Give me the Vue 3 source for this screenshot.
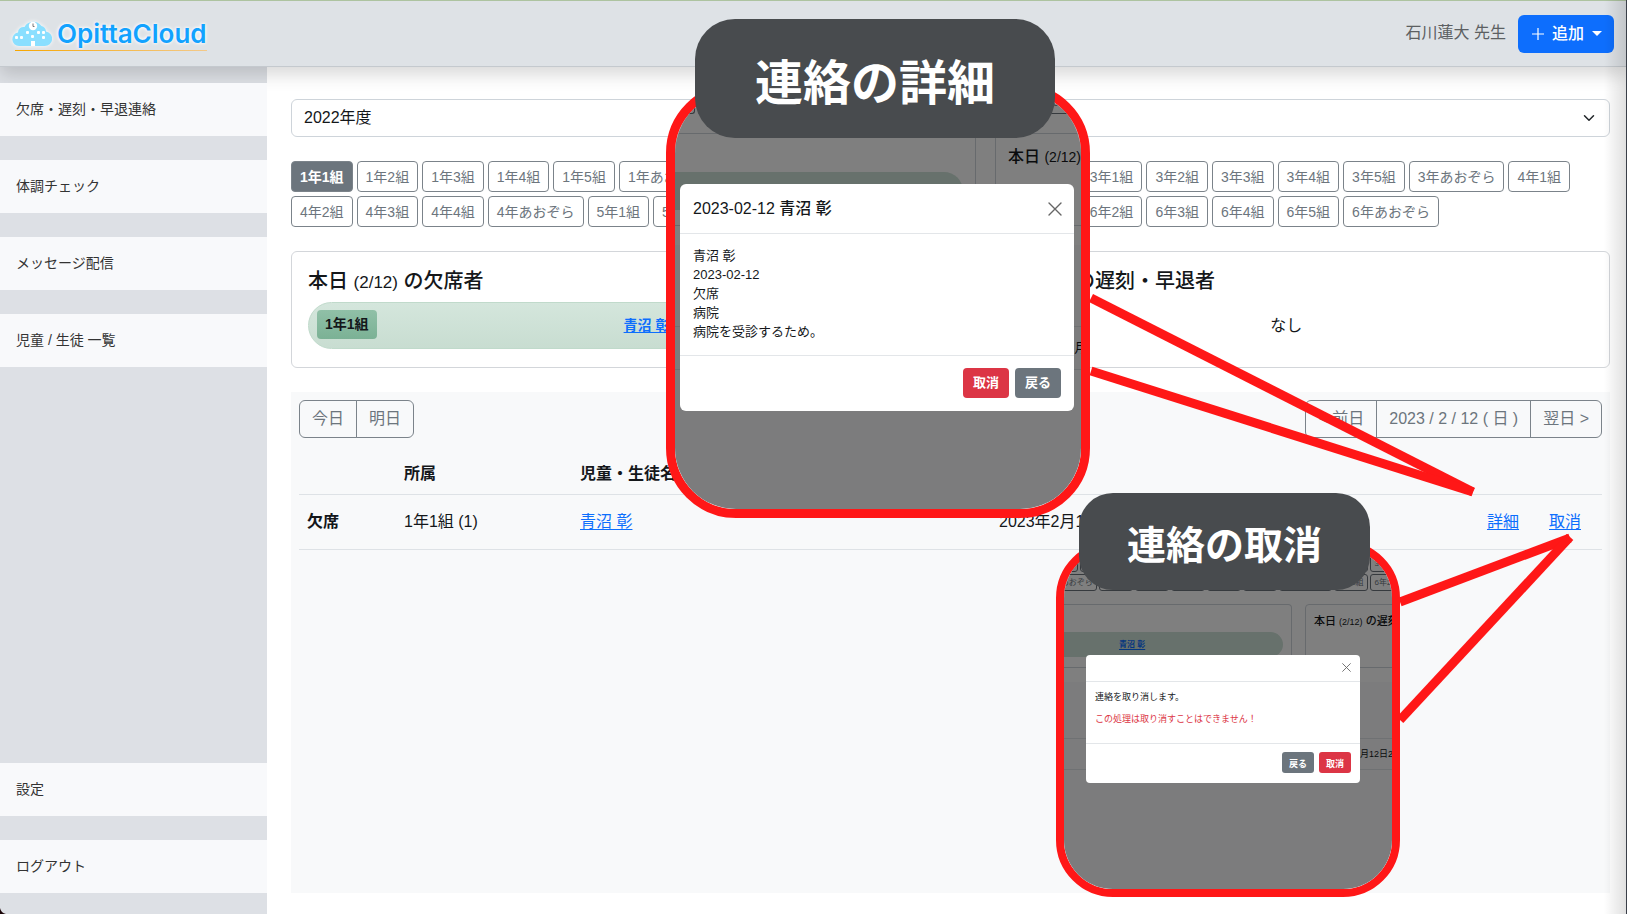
<script setup>
import { ref } from 'vue'

const mainLinks = ['欠席・遅刻・早退連絡', '体調チェック', 'メッセージ配信', '児童 / 生徒 一覧']
const footLinks = ['設定', 'ログアウト']

const counts = { 1: 5, 2: 4, 3: 5, 4: 4, 5: 5, 6: 5 }
const classes = Object.entries(counts).flatMap(([grade, n]) => [
  ...Array.from({ length: n }, (_, i) => `${grade}年${i + 1}組`),
  `${grade}年あおぞら`,
])
const current = ref('1年1組')
const year = ref('2022年度')

// Chips that lie under a callout's label carry no text.
const chipRow = (from, to) =>
  classes.slice(from, to).map((name, i, all) => ({
    wide: name.endsWith('あおぞら'),
    text: i === 0 || i >= all.length - 2 ? name : '',
  }))
const upperChips = chipRow(3, 12)
const lowerChips = chipRow(21, 30)

const callouts = [
  { id: 'detail', label: '連絡の詳細', rows: [lowerChips] },
  { id: 'cancel', label: '連絡の取消', rows: [upperChips, lowerChips] },
]
const details = ['青沼 彰', '2023-02-12', '欠席', '病院', '病院を受診するため。']
</script>

<template>
  <div class="app">
    <header class="topbar">
      <a class="brand" href="#" aria-label="OpittaCloud">
        <svg class="cloud" viewBox="0 0 40 28" aria-hidden="true">
          <path d="M7 26a6.800 6.800 0 0 1-1-13.500 5.500 5.500 0 0 1 6.500-5.500 10 10 0 0 1 17-1 6 6 0 0 1 4.500 5.500A7.300 7.300 0 0 1 32.500 26z" fill="#8adfff" />
          <circle cx="21" cy="6" r="4.200" fill="#fff" />
          <path d="M21 3.500v3h1.500" fill="none" stroke="#777" stroke-width="1" />
          <g fill="#fff">
            <rect x="3" y="16" width="3" height="3" rx="1" />
            <rect x="8" y="16" width="3" height="3" rx="1" />
            <rect x="14" y="11" width="3" height="3" rx="1" />
            <rect x="19" y="15" width="3" height="3" rx="1" />
            <rect x="25" y="11" width="3" height="3" rx="1" />
            <rect x="30" y="11" width="3" height="3" rx="1" />
            <rect x="30" y="16" width="3" height="3" rx="1" />
            <rect x="19" y="21" width="4" height="5" />
          </g>
        </svg>
        <span>OpittaCloud</span>
      </a>
      <div class="account">
        <span class="user">石川蓮大 先生</span>
        <button class="add" type="button">
          <svg width="12" height="12" viewBox="0 0 12 12" aria-hidden="true"><path d="M6 0v12M0 6h12" stroke="#fff" stroke-width="1.200" /></svg>
          <span>追加</span>
          <svg width="10" height="5" viewBox="0 0 10 5" aria-hidden="true"><path d="M0 0h10L5 5z" fill="#fff" /></svg>
        </button>
      </div>
    </header>

    <div class="body">
      <nav class="sidebar">
        <a v-for="l in mainLinks" :key="l" href="#">{{ l }}</a>
        <div class="spacer"></div>
        <a v-for="l in footLinks" :key="l" href="#">{{ l }}</a>
      </nav>

      <main>
        <div class="select">
          <select v-model="year" aria-label="年度"><option>2022年度</option></select>
          <svg width="12" height="12" viewBox="0 0 16 16" aria-hidden="true"><path d="M2 5l6 6 6-6" fill="none" stroke="#212529" stroke-width="2" stroke-linecap="round" stroke-linejoin="round" /></svg>
        </div>

        <div class="chips">
          <button v-for="c in classes" :key="c" type="button" :class="{ on: c === current }" @click="current = c">{{ c }}</button>
        </div>

        <div class="cards">
          <section class="card">
            <h2>本日 <small>(2/12)</small> の欠席者</h2>
            <div class="pill"><span class="badge">1年1組</span><span class="who"><a href="#">青沼 彰</a></span></div>
          </section>
          <section class="card">
            <h2>本日 <small>(2/12)</small> の遅刻・早退者</h2>
            <p class="none">なし</p>
          </section>
        </div>

        <section class="panel">
          <div class="tools">
            <div class="group"><button type="button">今日</button><button type="button">明日</button></div>
            <div class="group"><button type="button">&lt; 前日</button><button type="button">2023 / 2 / 12 ( 日 )</button><button type="button">翌日 &gt;</button></div>
          </div>
          <table>
            <colgroup><col class="c1" /><col class="c2" /><col class="c3" /><col /><col class="c5" /></colgroup>
            <thead><tr><th></th><th>所属</th><th>児童・生徒名</th><th></th><th></th></tr></thead>
            <tbody>
              <tr>
                <th scope="row">欠席</th>
                <td>1年1組 (1)</td>
                <td><a href="#">青沼 彰</a></td>
                <td>2023年2月12日</td>
                <td><div class="actions"><a href="#">詳細</a><a href="#">取消</a></div></td>
              </tr>
            </tbody>
          </table>
        </section>
      </main>
    </div>

    <svg class="pointers" aria-hidden="true">
      <path d="M1091 298L1473 492" /><path d="M1091 371L1473 492" />
      <path d="M1400 602L1570 538" /><path d="M1400 720L1570 537" />
    </svg>

    <section v-for="c in callouts" :key="c.id" class="callout" :class="c.id">
      <div class="frame">
        <div class="mini">
          <div v-for="(row, i) in c.rows" :key="i" class="mini-chips">
            <span v-for="(chip, j) in row" :key="j" :class="{ wide: chip.wide }">{{ chip.text }}</span>
          </div>
          <div class="mini-cards">
            <div class="mini-card first"><div class="mini-pill"><a href="#">青沼 彰</a></div></div>
            <div class="mini-card"><h3>本日 <small>(2/12)</small> の遅刻・早退者</h3></div>
          </div>
          <div class="mini-panel">
            <div class="mini-head"></div>
            <div class="mini-row">2023年2月12日2</div>
          </div>
        </div>
        <div class="shade"></div>
        <div class="modal" role="dialog" :aria-label="c.label">
          <div class="modal-head">
            <h3>{{ c.id === 'detail' ? '2023-02-12 青沼 彰' : '' }}</h3>
            <button class="close" type="button" aria-label="閉じる">
              <svg viewBox="0 0 14 14" aria-hidden="true"><path d="M1 1l12 12M13 1L1 13" fill="none" stroke="#666" stroke-width="1.400" stroke-linecap="round" /></svg>
            </button>
          </div>
          <div v-if="c.id === 'detail'" class="modal-body">
            <p v-for="d in details" :key="d">{{ d }}</p>
          </div>
          <div v-else class="modal-body">
            <p>連絡を取り消します。</p>
            <p class="warn">この処理は取り消すことはできません！</p>
          </div>
          <div class="modal-foot">
            <button class="danger" type="button">取消</button>
            <button class="back" type="button">戻る</button>
          </div>
        </div>
      </div>
      <div class="label">{{ c.label }}</div>
    </section>

    <div class="edge"></div>
    <svg class="corner" width="6" height="6" viewBox="0 0 6 6" aria-hidden="true"><path d="M0 0Q1 5 6 6H0z" fill="#1a0508" /></svg>
  </div>
</template>

<style>
body { margin: 0; }
</style>

<style scoped>
* { box-sizing: border-box; }
.app {
  position: relative;
  display: flex;
  flex-direction: column;
  min-height: 100vh;
  overflow: hidden;
  background: #fff;
  color: #14171a;
  font: 16px/24px "Liberation Sans", "Noto Sans CJK JP", sans-serif;
}
button, select { font: inherit; color: inherit; margin: 0; }
h2, h3, p { margin: 0; font-weight: 500; }
p { font-weight: 400; }
a { color: #0d6efd; text-underline-offset: 2px; }

.topbar {
  position: relative;
  z-index: 1;
  display: flex;
  justify-content: space-between;
  align-items: center;
  height: 67px;
  padding: 0 13px 0 12px;
  background: #dee2e6;
  border-top: 1px solid #adc3a0;
  border-bottom: 1px solid #c4c9ce;
  box-shadow: 0 8px 16px rgba(0, 0, 0, 0.15);
}
.brand {
  position: relative;
  display: flex;
  align-items: center;
  gap: 5px;
  color: #12a2ff;
  text-decoration: none;
  font: 600 26px/34px Inter, sans-serif;
  text-shadow: 0 0 3px #fff, 0 0 4px #fff;
}
.brand::after {
  content: "";
  position: absolute;
  left: 3px;
  right: 0;
  bottom: 0;
  height: 1px;
  background: linear-gradient(90deg, #f7a600, #f3c98a);
}
.cloud { width: 40px; height: 28px; filter: drop-shadow(0 0 2px #fff); }
.account { display: flex; align-items: center; gap: 12px; }
.user { padding-bottom: 2px; color: #5c5f62; }
.add {
  display: flex;
  align-items: center;
  gap: 8px;
  height: 38px;
  padding: 0 12px 0 14px;
  border: 0;
  border-radius: 6px;
  background: #0d6efd;
  color: #fff;
  font-weight: 500;
}

.body { display: flex; flex: 1; }
.sidebar {
  display: flex;
  flex-direction: column;
  gap: 24px;
  width: 267px;
  padding: 16px 0 21px;
  background: #dde0e5;
}
.sidebar a {
  position: relative;
  z-index: 2;
  padding: 14px 16px 15px;
  background: #f8f9fb;
  color: #333;
  font-size: 14px;
  text-decoration: none;
}
.spacer { flex: 1; }

main {
  display: flex;
  flex: 1;
  flex-direction: column;
  gap: 24px;
  min-width: 0;
  padding: 32px 17px 21px 24px;
}
.select { position: relative; }
.select select {
  display: block;
  width: 100%;
  height: 38px;
  padding: 0 12px;
  border: 1px solid #ced4da;
  border-radius: 6px;
  background: #fff;
  appearance: none;
}
.select svg { position: absolute; right: 15px; top: 13px; }
.chips { display: flex; flex-wrap: wrap; gap: 4px; padding-right: 24px; }
.chips button {
  height: 31px;
  padding: 0 8px;
  border: 1px solid #7b838a;
  border-radius: 4px;
  background: #fff;
  color: #6c757d;
  font-size: 14px;
}
.chips button.on { background: #6c757d; color: #fff; font-weight: bold; }

.cards { display: grid; grid-template-columns: 1fr 1fr; gap: 24px; }
.card {
  height: 117px;
  padding: 17px 16px;
  border: 1px solid #d3d6da;
  border-radius: 6px;
}
.card h2 { margin-bottom: 7px; font-size: 20px; }
.card small { font-size: 17px; }
.pill {
  display: flex;
  align-items: center;
  height: 47px;
  padding: 0 8px 2px;
  border: 1px solid #c0dacb;
  border-radius: 24px;
  background: linear-gradient(#d4e6dc, #c8ddd1);
  font-size: 14px;
  font-weight: bold;
}
.badge { padding: 2px 8px 3px; border-radius: 4px; background: linear-gradient(#90c0a7, #7bb195); }
.who { flex: 1; padding-left: 4px; text-align: center; }
.none { padding-top: 12px; text-align: center; }

.panel { flex: 1; padding: 8px; background: #f8f9fa; }
.tools { display: flex; justify-content: space-between; margin-bottom: 16px; }
.group { display: flex; }
.group button {
  height: 38px;
  padding: 0 12px;
  border: 1px solid #7b838a;
  background: none;
  color: #6c757d;
}
.group button + button { margin-left: -1px; }
.group button:first-child { border-radius: 6px 0 0 6px; }
.group button:last-child { border-radius: 0 6px 6px 0; }
table { width: 100%; border-spacing: 0; table-layout: fixed; text-align: left; }
.c1 { width: 97px; }
.c2 { width: 176px; }
.c3 { width: 419px; }
.c5 { width: 136px; }
th, td { height: 41px; padding: 0 8px; border-bottom: 1px solid #dee2e6; white-space: nowrap; }
tbody th, tbody td { height: 55px; }
.actions { display: flex; justify-content: flex-end; gap: 30px; padding-right: 13px; }

.pointers { position: absolute; inset: 0; z-index: 3; width: 100%; height: 100%; }
.pointers path { stroke: #ff1717; stroke-width: 9; }

.callout { position: absolute; z-index: 4; }
.frame {
  position: relative;
  width: 100%;
  height: 100%;
  overflow: hidden;
  border: 9px solid #ff1717;
  border-radius: 70px;
  background: #fff;
}
.label {
  position: absolute;
  display: flex;
  align-items: center;
  justify-content: center;
  border-radius: 40px;
  background: #484b4e;
  color: #fff;
  font-family: "Noto Sans CJK JP", sans-serif;
  font-weight: bold;
}
.shade { position: absolute; inset: 0; background: rgba(0, 0, 0, 0.5); }

.detail { left: 666px; top: 83px; width: 424px; height: 435px; }
.detail .label { left: 29px; top: -64px; width: 360px; height: 119px; font-size: 48px; }
.cancel { left: 1056px; top: 541px; width: 344px; height: 356px; }
.cancel .frame { border-width: 8px; border-radius: 57px; }
.cancel .label { left: 23px; top: -48px; width: 291px; height: 97px; border-radius: 34px; font-size: 39px; }

.mini { display: flex; flex-direction: column; height: 100%; white-space: nowrap; }
.mini-chips { display: flex; }
.mini-chips span { flex: none; border: 1px solid #6c757d; border-radius: 3px; color: #6c757d; text-align: center; }
.mini-cards { display: grid; }
.mini-card { border: 1px solid #ced4da; border-radius: 4px; overflow: hidden; }
.mini-card.first { border-left: 0; border-radius: 0 4px 4px 0; padding-left: 0; }
.mini-pill { border-radius: 0 20px 20px 0; background: #cfe2d8; font-weight: bold; }
.mini-panel { flex: 1; background: #f8f9fa; }
.mini-head, .mini-row { display: flex; align-items: flex-end; border-bottom: 1px solid #dee2e6; }

.detail .mini-chips { gap: 4px; height: 22px; margin: 0 0 19px -57px; font-size: 11px; line-height: 20px; }
.detail .mini-chips span { width: 49px; border-top: 0; }
.detail .mini-chips .wide { width: 77px; }
.detail .mini-cards { grid-template-columns: 301px 519px; gap: 19px; margin-bottom: 19px; }
.detail .mini-card { height: 93px; padding: 12px; }
.detail .mini-card.first { padding: 38px 12px 0 0; }
.detail .mini-card h3 { font-size: 16px; line-height: 22px; }
.detail .mini-card small { font-size: 14px; }
.detail .mini-pill { height: 38px; padding-left: 50px; font-size: 11px; line-height: 38px; }
.detail .mini-head { height: 82px; }
.detail .mini-row { height: 43px; padding: 0 0 9px 350px; font-size: 13px; }

.cancel .mini { padding-top: 6px; }
.cancel .mini-chips { gap: 2px; height: 17px; margin: 0 0 2px -20px; font-size: 8px; line-height: 15px; }
.cancel .mini-chips span { width: 34px; }
.cancel .mini-chips .wide { width: 53px; }
.cancel .mini-cards { grid-template-columns: 228px 358px; gap: 13px; margin: 11px 0 14px; }
.cancel .mini-card { height: 64px; padding: 9px 8px; }
.cancel .mini-card.first { padding: 27px 8px 0 0; }
.cancel .mini-card h3 { font-size: 11px; line-height: 14px; }
.cancel .mini-card small { font-size: 9px; }
.cancel .mini-pill { height: 25px; padding-left: 55px; font-size: 8px; line-height: 25px; }
.cancel .mini-head { height: 57px; }
.cancel .mini-row { height: 31px; padding: 0 0 3px 262px; font-size: 9px; }

.modal { position: absolute; border-radius: 6px; background: #fff; font-size: 13px; }
.modal-head { display: flex; align-items: center; justify-content: space-between; border-bottom: 1px solid #e3e6e9; }
.close { display: flex; padding: 0; border: 0; background: none; }
.modal-foot { display: flex; justify-content: flex-end; align-items: center; border-top: 1px solid #e3e6e9; }
.modal-foot button { padding: 0; border: 0; border-radius: 4px; color: #fff; font-weight: bold; }
.danger { background: #dc3545; }
.back { background: #6c757d; }
.warn { color: #dc3545; }

.detail .modal { left: 5px; top: 92px; width: 394px; }
.detail .modal-head { height: 50px; padding: 0 12px 0 13px; }
.detail .modal-head h3 { font-size: 16px; }
.detail .close svg { width: 14px; height: 14px; }
.detail .modal-body { padding: 12px 13px 14px; line-height: 19px; }
.detail .modal-foot { gap: 6px; height: 56px; padding: 0 13px 2px; }
.detail .modal-foot button { width: 46px; height: 30px; }

.cancel .modal { left: 22px; top: 106px; width: 274px; border-radius: 4px; font-size: 9px; }
.cancel .modal-head { height: 27px; padding: 0 9px 2px; }
.cancel .close svg { width: 9px; height: 9px; }
.cancel .modal-body { display: grid; gap: 8px; padding: 8px 9px 17px; line-height: 14px; }
.cancel .modal-foot { flex-direction: row-reverse; justify-content: flex-start; gap: 5px; height: 40px; padding: 0 9px 2px; }
.cancel .modal-foot button { width: 32px; height: 21px; border-radius: 3px; }

.edge {
  position: absolute;
  inset: 0;
  z-index: 5;
  border-right: 1px solid #3a3f48;
  background: linear-gradient(270deg, rgba(0, 0, 0, 0.12), transparent 22px);
  pointer-events: none;
}
.corner { position: absolute; left: 0; bottom: 0; z-index: 5; }
</style>
